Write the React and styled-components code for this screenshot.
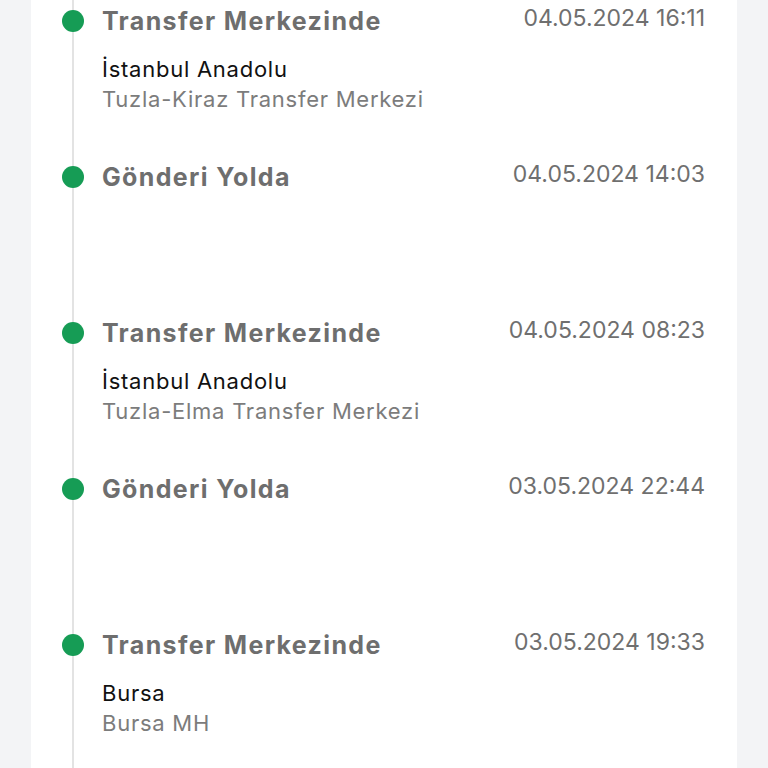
import React from 'react'
import styled, { createGlobalStyle } from 'styled-components'

const GlobalStyle = createGlobalStyle`
    html, body {
        margin: 0;
        padding: 0;
        background: #f3f4f6;
        font-family: Inter, "Noto Sans", "Liberation Sans", sans-serif;
    }
`

const Page = styled.div`
    height: 768px;
    overflow: hidden;
    padding: 0 31px;
`

const Card = styled.div`
    background: #ffffff;
    height: 768px;
    padding: 3px 32px 0 31px;
    box-sizing: border-box;
`

const Timeline = styled.ul`
    list-style: none;
    margin: 0;
    padding: 0;
    position: relative;

    &::before{
        content: '';
        position: absolute;
        left: 10px;
        top: -10px;
        bottom: -200px;
        width: 2px;
        background: #e3e3e3;
    }
`

const Item = styled.li`
    display: grid;
    grid-template-columns: 22px 1fr auto;
    column-gap: 18px;
    align-items: start;
    height: 156px;
    position: relative;
`

const Dot = styled.span`
    width: 22px;
    height: 22px;
    margin-top: 7px;
    border-radius: 50%;
    background: #169c55;
    position: relative;
    z-index: 1;
`

const Body = styled.div`
    display: flex;
    flex-direction: column;
`

const Title = styled.div`
    font-size: 25px;
    line-height: 36px;
    font-weight: 700;
    color: #6e6e6e;
    letter-spacing: 1.35px;
`

const Place = styled.div`
    margin-top: 15px;
    font-size: 22px;
    line-height: 30px;
    color: #111111;
    letter-spacing: 0.75px;
`

const Branch = styled.div`
    font-size: 22px;
    line-height: 30px;
    color: #7c7c7c;
    letter-spacing: 0.75px;
`

const Stamp = styled.div`
    font-size: 23px;
    line-height: 30px;
    color: #6f6f6f;
    white-space: nowrap;
`

const events = [
    { title: 'Transfer Merkezinde', date: '04.05.2024 16:11', place: 'İstanbul Anadolu', branch: 'Tuzla-Kiraz Transfer Merkezi' },
    { title: 'Gönderi Yolda', date: '04.05.2024 14:03' },
    { title: 'Transfer Merkezinde', date: '04.05.2024 08:23', place: 'İstanbul Anadolu', branch: 'Tuzla-Elma Transfer Merkezi' },
    { title: 'Gönderi Yolda', date: '03.05.2024 22:44' },
    { title: 'Transfer Merkezinde', date: '03.05.2024 19:33', place: 'Bursa', branch: 'Bursa MH' },
]

export default function App() {
    return (
        <Page>
            <GlobalStyle />
            <Card>
                <Timeline>
                    {events.map((e, i) => (
                        <Item key={i}>
                            <Dot />
                            <Body>
                                <Title>{e.title}</Title>
                                {e.place && <Place>{e.place}</Place>}
                                {e.branch && <Branch>{e.branch}</Branch>}
                            </Body>
                            <Stamp>{e.date}</Stamp>
                        </Item>
                    ))}
                </Timeline>
            </Card>
        </Page>
    )
}
